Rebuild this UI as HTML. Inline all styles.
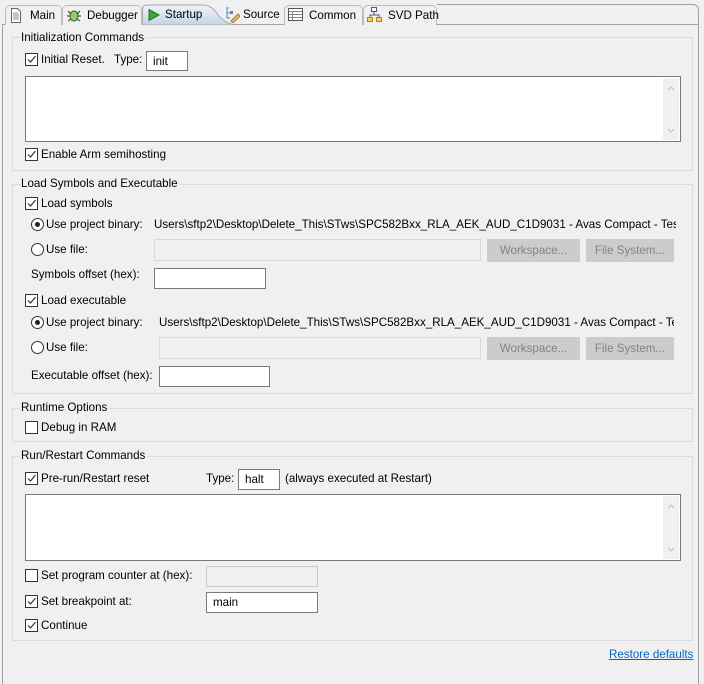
<!DOCTYPE html>
<html><head><meta charset="utf-8"><style>
*{box-sizing:border-box;margin:0;padding:0}
body{width:704px;height:670px;background:#f0f0f0;font-family:"Liberation Sans",sans-serif;font-size:11.6px;color:#000;position:relative;overflow:hidden}
.a{position:absolute}
.t{position:absolute;line-height:16px;white-space:nowrap}
.g{position:absolute;border:1px solid #dcdcdc;left:12px;width:681px}
.gt{position:absolute;left:21px;line-height:16px;background:#f0f0f0;padding-right:2px}
.cb{position:absolute;width:13px;height:13px;border:1px solid #333;background:#fff;left:25px}
.cb svg{position:absolute;left:0;top:0}
.rb{position:absolute;width:13px;height:13px;border:1px solid #333;border-radius:50%;background:#fff;left:31px}
.rb.on::after{content:"";position:absolute;left:3px;top:3px;width:5px;height:5px;border-radius:50%;background:#222}
.in{position:absolute;border:1px solid #7a7a7a;background:#fff;padding-left:6px;line-height:19px}
.dis{position:absolute;border:1px solid #d9d9d9;background:#f0f0f0}
.btn{position:absolute;border:1px solid #cccccc;background:#cccccc;color:#838383;text-align:center;line-height:21px}
.ta{position:absolute;left:25px;width:656px;border:1px solid #7a7a7a;background:#fff}
.ta .sb{position:absolute;right:1px;top:1px;bottom:1px;width:16px;background:#f0f0f0}
.tab{position:absolute;top:5px;height:20px;border:1px solid #bcbcbc;border-bottom:none;border-radius:5px 5px 0 0;background:#f0f0f0;line-height:19px;padding-left:24px;white-space:nowrap}
</style></head><body>
<div class="a" style="left:2px;top:24px;width:697px;height:660px;border:1px solid #a0a0a0;border-bottom:none"></div>
<div class="a" style="left:437px;top:4px;width:262px;height:21px;border-top:1px solid #a0a0a0;border-right:1px solid #a0a0a0;border-radius:0 6px 0 0"></div>
<div class="tab" style="left:5px;width:57px">Main</div>
<svg class="a" style="left:10px;top:8px" width="12" height="15"><path d="M1.5 .5h6l3 3v11h-9z" fill="#fff" stroke="#666"/><path d="M3 5h5M3 7h6M3 9h6M3 11h6" stroke="#888"/></svg>
<div class="tab" style="left:62px;width:80px">Debugger</div>
<svg class="a" style="left:66px;top:7px" width="16" height="16"><ellipse cx="8" cy="9" rx="4" ry="5" fill="#9c6" stroke="#363"/><path d="M2 4l3 3M14 4l-3 3M1 9h3M12 9h3M2 14l3-2M14 14l-3-2" stroke="#333"/></svg>
<svg class="a" style="left:142px;top:4px" width="96" height="21"><defs><linearGradient id="gr" x1="0" y1="0" x2="0" y2="1"><stop offset="0" stop-color="#eef3f8"/><stop offset="1" stop-color="#c4d4e6"/></linearGradient></defs><path d="M0.5 21V5Q0.5 1 5 1H62Q68 1 74 8Q82 20 95 21Z" fill="url(#gr)" stroke="#a8a8a8"/></svg>
<div class="t" style="left:165px;top:7px">Startup</div>
<svg class="a" style="left:148px;top:9px" width="12" height="12"><path d="M1 0.5L11 6 1 11.5z" fill="#3a3" stroke="#272"/></svg>
<div class="t" style="left:243px;top:7px">Source</div>
<svg class="a" style="left:224px;top:7px" width="16" height="16"><path d="M2 1h3M3 2v9h3M3 6h3" stroke="#58a" fill="none"/><rect x="6" y="4" width="3" height="3" fill="#58a"/><path d="M7 14l7-7 2 2-7 7z" fill="#eb6" stroke="#a74"/></svg>
<div class="tab" style="left:284px;width:79px">Common</div>
<svg class="a" style="left:288px;top:8px" width="15" height="13"><rect x=".5" y=".5" width="14" height="12" fill="#fff" stroke="#555"/><path d="M1 3.5h13M4.5 4v8M1 6.5h13M1 9.5h13" stroke="#888"/></svg>
<div class="tab" style="left:363px;width:74px">SVD Path</div>
<svg class="a" style="left:367px;top:7px" width="15" height="16"><rect x="4.5" y=".5" width="5" height="4" fill="#fff" stroke="#557"/><rect x=".5" y="10.5" width="5" height="4" fill="#fc6" stroke="#a80"/><rect x="9.5" y="10.5" width="5" height="4" fill="#fc6" stroke="#a80"/><path d="M7 5v3M3 10V8h9v2" stroke="#557" fill="none"/></svg>

<div class="g" style="top:37px;height:134px"></div>
<div class="gt" style="top:30px">Initialization Commands</div>
<div class="cb" style="top:53px"><svg width="11" height="11"><path d="M2 5.5l2.5 2.5 5-6" stroke="#333" stroke-width="1.2" fill="none"/></svg></div>
<div class="t" style="left:41px;top:52px">Initial Reset.</div>
<div class="t" style="left:114px;top:52px">Type:</div>
<div class="in" style="left:146px;top:51px;width:42px;height:20px">init</div>
<div class="ta" style="top:76px;height:66px"><div class="sb"><svg width="16" height="64"><path d="M5 12l3-3 3 3M5 51l3 3 3-3" stroke="#c0c0c0" fill="none"/></svg></div></div>
<div class="cb" style="top:148px"><svg width="11" height="11"><path d="M2 5.5l2.5 2.5 5-6" stroke="#333" stroke-width="1.2" fill="none"/></svg></div>
<div class="t" style="left:41px;top:147px">Enable Arm semihosting</div>

<div class="g" style="top:184px;height:210px"></div>
<div class="gt" style="top:176px">Load Symbols and Executable</div>
<div class="cb" style="top:197px"><svg width="11" height="11"><path d="M2 5.5l2.5 2.5 5-6" stroke="#333" stroke-width="1.2" fill="none"/></svg></div>
<div class="t" style="left:41px;top:196px">Load symbols</div>
<div class="rb on" style="top:218px"></div>
<div class="t" style="left:46px;top:217px">Use project binary:</div>
<div class="t" style="left:154px;top:217px;width:522px;overflow:hidden">Users\sftp2\Desktop\Delete_This\STws\SPC582Bxx_RLA_AEK_AUD_C1D9031 - Avas Compact - Test A</div>
<div class="rb" style="top:243px"></div>
<div class="t" style="left:46px;top:242px">Use file:</div>
<div class="dis" style="left:154px;top:239px;width:327px;height:22px"></div>
<div class="btn" style="left:487px;top:239px;width:93px;height:23px">Workspace...</div>
<div class="btn" style="left:586px;top:239px;width:88px;height:23px">File System...</div>
<div class="t" style="left:31px;top:267px">Symbols offset (hex):</div>
<div class="in" style="left:154px;top:268px;width:112px;height:21px"></div>
<div class="cb" style="top:294px"><svg width="11" height="11"><path d="M2 5.5l2.5 2.5 5-6" stroke="#333" stroke-width="1.2" fill="none"/></svg></div>
<div class="t" style="left:41px;top:293px">Load executable</div>
<div class="rb on" style="top:316px"></div>
<div class="t" style="left:46px;top:315px">Use project binary:</div>
<div class="t" style="left:159px;top:315px;width:515px;overflow:hidden">Users\sftp2\Desktop\Delete_This\STws\SPC582Bxx_RLA_AEK_AUD_C1D9031 - Avas Compact - Test</div>
<div class="rb" style="top:341px"></div>
<div class="t" style="left:46px;top:340px">Use file:</div>
<div class="dis" style="left:159px;top:337px;width:322px;height:22px"></div>
<div class="btn" style="left:487px;top:337px;width:93px;height:23px">Workspace...</div>
<div class="btn" style="left:586px;top:337px;width:88px;height:23px">File System...</div>
<div class="t" style="left:31px;top:368px">Executable offset (hex):</div>
<div class="in" style="left:159px;top:366px;width:111px;height:21px"></div>

<div class="g" style="top:408px;height:34px"></div>
<div class="gt" style="top:400px">Runtime Options</div>
<div class="cb" style="top:421px"></div>
<div class="t" style="left:41px;top:420px">Debug in RAM</div>

<div class="g" style="top:456px;height:185px"></div>
<div class="gt" style="top:448px">Run/Restart Commands</div>
<div class="cb" style="top:472px"><svg width="11" height="11"><path d="M2 5.5l2.5 2.5 5-6" stroke="#333" stroke-width="1.2" fill="none"/></svg></div>
<div class="t" style="left:41px;top:471px">Pre-run/Restart reset</div>
<div class="t" style="left:206px;top:471px">Type:</div>
<div class="in" style="left:238px;top:469px;width:42px;height:21px">halt</div>
<div class="t" style="left:285px;top:471px">(always executed at Restart)</div>
<div class="ta" style="top:494px;height:67px"><div class="sb"><svg width="16" height="65"><path d="M5 12l3-3 3 3M5 52l3 3 3-3" stroke="#c0c0c0" fill="none"/></svg></div></div>
<div class="cb" style="top:569px"></div>
<div class="t" style="left:41px;top:568px">Set program counter at (hex):</div>
<div class="dis" style="left:206px;top:566px;width:112px;height:21px;border-color:#ccc"></div>
<div class="cb" style="top:595px"><svg width="11" height="11"><path d="M2 5.5l2.5 2.5 5-6" stroke="#333" stroke-width="1.2" fill="none"/></svg></div>
<div class="t" style="left:41px;top:594px">Set breakpoint at:</div>
<div class="in" style="left:206px;top:592px;width:112px;height:21px">main</div>
<div class="cb" style="top:619px"><svg width="11" height="11"><path d="M2 5.5l2.5 2.5 5-6" stroke="#333" stroke-width="1.2" fill="none"/></svg></div>
<div class="t" style="left:41px;top:618px">Continue</div>

<div class="t" style="left:609px;top:647px;color:#0066cc;text-decoration:underline">Restore defaults</div>
</body></html>
